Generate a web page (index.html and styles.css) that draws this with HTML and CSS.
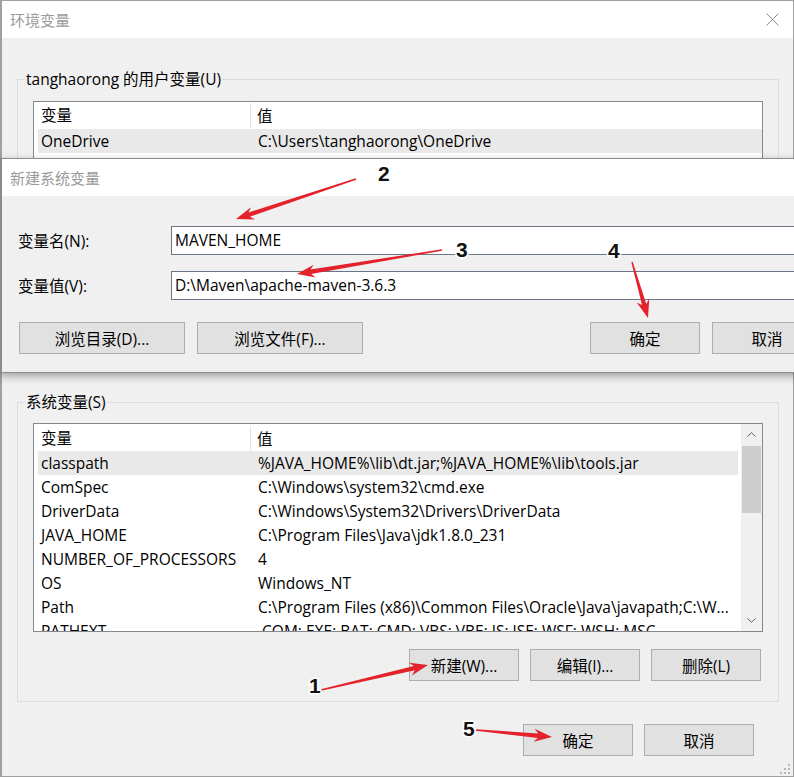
FILE: index.html
```html
<!DOCTYPE html>
<html lang="zh-CN">
<head>
<meta charset="utf-8">
<title>环境变量</title>
<link rel="stylesheet" href="styles.css">
</head>
<body>
<div class="window">
  <div class="titlebar">
    <span class="title">环境变量</span>
    <svg class="close" width="13" height="13" viewBox="0 0 13 13"><path d="M0.5 0.5 L12.5 12.5 M12.5 0.5 L0.5 12.5" stroke="#8a8a8a" stroke-width="1" fill="none"/></svg>
  </div>
  <div class="content">
    <fieldset class="group group-user">
      <legend>tanghaorong 的用户变量(U)</legend>
      <div class="listbox list-user">
        <div class="lv">
          <div class="lv-head"><div class="c1">变量</div><div class="c2">值</div></div>
          <div class="lv-row sel"><div class="c1">OneDrive</div><div class="c2">C:\Users\tanghaorong\OneDrive</div></div>
          <div class="lv-row"><div class="c1">Path</div><div class="c2">C:\Users\tanghaorong\AppData\Local\Microsoft\WindowsApps;</div></div>
          <div class="lv-row"><div class="c1">TEMP</div><div class="c2">C:\Users\tanghaorong\AppData\Local\Temp</div></div>
          <div class="lv-row"><div class="c1">TMP</div><div class="c2">C:\Users\tanghaorong\AppData\Local\Temp</div></div>
        </div>
      </div>
    </fieldset>

    <fieldset class="group group-sys">
      <legend>系统变量(S)</legend>
      <div class="listbox list-sys">
        <div class="lv">
          <div class="lv-head"><div class="c1">变量</div><div class="c2">值</div></div>
          <div class="lv-row sel"><div class="c1">classpath</div><div class="c2">%JAVA_HOME%\lib\dt.jar;%JAVA_HOME%\lib\tools.jar</div></div>
          <div class="lv-row"><div class="c1">ComSpec</div><div class="c2">C:\Windows\system32\cmd.exe</div></div>
          <div class="lv-row"><div class="c1">DriverData</div><div class="c2">C:\Windows\System32\Drivers\DriverData</div></div>
          <div class="lv-row"><div class="c1">JAVA_HOME</div><div class="c2">C:\Program Files\Java\jdk1.8.0_231</div></div>
          <div class="lv-row"><div class="c1">NUMBER_OF_PROCESSORS</div><div class="c2">4</div></div>
          <div class="lv-row"><div class="c1">OS</div><div class="c2">Windows_NT</div></div>
          <div class="lv-row"><div class="c1">Path</div><div class="c2">C:\Program Files (x86)\Common Files\Oracle\Java\javapath;C:\W...</div></div>
          <div class="lv-row"><div class="c1">PATHEXT</div><div class="c2">.COM;.EXE;.BAT;.CMD;.VBS;.VBE;.JS;.JSE;.WSF;.WSH;.MSC</div></div>
        </div>
        <div class="vscroll">
          <div class="sb-btn"><svg width="9" height="5" viewBox="0 0 9 5"><path d="M0.5 4.5 L4.5 0.7 L8.5 4.5" stroke="#606060" fill="none"/></svg></div>
          <div class="sb-track"><div class="sb-thumb"></div></div>
          <div class="sb-btn"><svg width="9" height="5" viewBox="0 0 9 5"><path d="M0.5 0.5 L4.5 4.3 L8.5 0.5" stroke="#606060" fill="none"/></svg></div>
        </div>
      </div>
      <div class="btnrow">
        <button class="btn">新建(W)...</button>
        <button class="btn">编辑(I)...</button>
        <button class="btn">删除(L)</button>
      </div>
    </fieldset>

    <div class="footer">
      <button class="btn">确定</button>
      <button class="btn">取消</button>
    </div>
  </div>
  <svg class="grip" width="10" height="10" viewBox="0 0 10 10">
    <rect x="8" y="0" width="2" height="2" fill="#b5b5b5"/>
    <rect x="8" y="4" width="2" height="2" fill="#b5b5b5"/>
    <rect x="4" y="4" width="2" height="2" fill="#b5b5b5"/>
    <rect x="8" y="8" width="2" height="2" fill="#b5b5b5"/>
    <rect x="4" y="8" width="2" height="2" fill="#b5b5b5"/>
    <rect x="0" y="8" width="2" height="2" fill="#b5b5b5"/>
  </svg>
</div>

<div class="dialog">
  <div class="dlg-title">新建系统变量</div>
  <div class="dlg-body">
    <div class="form">
      <label class="flabel">变量名(N):</label>
      <div class="finput">MAVEN_HOME</div>
      <label class="flabel">变量值(V):</label>
      <div class="finput">D:\Maven\apache-maven-3.6.3</div>
    </div>
    <div class="dlg-buttons">
      <div class="bgroup">
        <button class="btn btn-wide">浏览目录(D)...</button>
        <button class="btn btn-wide">浏览文件(F)...</button>
      </div>
      <div class="bgroup">
        <button class="btn">确定</button>
        <button class="btn">取消</button>
      </div>
    </div>
  </div>
</div>

<svg class="annotations" width="794" height="777" viewBox="0 0 794 777">
  <g class="arrow">
    <polygon points="0,-0.7 112.5,-2.2 108.5,-6.5 126.5,0 108.5,6.5 112.5,2.2 0,0.7" transform="translate(356,179) rotate(161.57)"/>
    <polygon points="0,-0.7 133,-2.2 129,-6.5 147,0 129,6.5 133,2.2 0,0.7" transform="translate(442,250) rotate(170.6)"/>
    <polygon points="0,-0.7 44.2,-2.2 40.2,-6.5 58.2,0 40.2,6.5 44.2,2.2 0,0.7" transform="translate(632,262) rotate(74.05)"/>
    <polygon points="0,-0.7 95.9,-2.2 91.9,-6.5 109.9,0 91.9,6.5 95.9,2.2 0,0.7" transform="translate(321,690) rotate(-13.15)"/>
    <polygon points="0,-0.7 62.3,-2.2 58.3,-6.5 76.3,0 58.3,6.5 62.3,2.2 0,0.7" transform="translate(476,730) rotate(5.26)"/>
  </g>
  <g class="num">
    <text x="378" y="181">2</text>
    <text x="456" y="257">3</text>
    <text x="608" y="258">4</text>
    <text x="309" y="693">1</text>
    <text x="463" y="736">5</text>
  </g>
</svg>
</body>
</html>
```

FILE: styles.css
```css
* { box-sizing: border-box; }

html, body {
  margin: 0;
  padding: 0;
}

body {
  width: 794px;
  height: 777px;
  overflow: hidden;
  position: relative;
  background: #f0f0f0;
  font-family: "Open Sans", "Noto Sans CJK SC", sans-serif;
  font-size: 15.5px;
  color: #000;
}

.window {
  width: 794px;
  height: 777px;
  border: 1px solid #a0a0a0;
  border-left-width: 2px;
  background: #f0f0f0;
  display: flex;
  flex-direction: column;
  position: relative;
}

.titlebar {
  height: 37px;
  flex: none;
  background: #fff;
  display: flex;
  align-items: center;
  justify-content: space-between;
  padding: 0 14px 0 8px;
}

.title {
  color: #9a9a9a;
  font-family: "Noto Sans CJK SC", sans-serif;
  font-size: 15px;
}

.close { display: block; }

.content {
  padding: 0 14px 0 15px;
  display: flex;
  flex-direction: column;
}

fieldset.group {
  margin: 0;
  min-width: 0;
  border: 1px solid #dcdcdc;
  padding: 0 15px;
}

legend {
  margin-left: -8px;
  padding: 0 1px;
  line-height: 20px;
}

.group-user {
  margin-top: 31px !important;
  padding-top: 12px !important;
  padding-bottom: 39px !important;
}

.group-sys {
  margin-top: 21px !important;
  padding-top: 11px !important;
  padding-bottom: 20px !important;
}

.listbox {
  background: #fff;
  border: 1px solid #828790;
  display: flex;
  overflow: hidden;
}

.list-user { height: 230px; }
.list-sys { height: 209px; }

.lv {
  flex: 1;
  min-width: 0;
  padding-left: 4px;
}

.list-sys .lv { padding-right: 3px; }

.lv-head {
  height: 27px;
  display: flex;
  align-items: center;
}

.lv-head .c1 {
  width: 213px;
  height: 25px;
  line-height: 25px;
  padding-left: 3px;
  border-right: 1px solid #e5e5e5;
}

.lv-head .c2 { padding-left: 6px; }

.list-sys .lv-head { padding-top: 2px; }

.lv-row {
  height: 24px;
  line-height: 24px;
  display: flex;
  white-space: nowrap;
}

.list-sys .lv-row { line-height: 25px; }

.lv-row .c1 {
  width: 217px;
  flex: none;
  padding-left: 3px;
}

.lv-row .c2 { padding-left: 3px; }

.lv-row.sel { background: #e9e9e9; }

.vscroll {
  width: 21px;
  flex: none;
  background: #f0f0f0;
  display: flex;
  flex-direction: column;
}

.sb-btn {
  height: 21px;
  flex: none;
  display: flex;
  align-items: center;
  justify-content: center;
}

.sb-btn svg { display: block; }

.sb-track { flex: 1; }

.sb-thumb {
  margin: 1px 1px 0;
  height: 67px;
  background: #cdcdcd;
}

.btn {
  height: 32px;
  width: 110px;
  margin: 0;
  padding: 0;
  background: #e1e1e1;
  border: 1px solid #adadad;
  border-radius: 0;
  font: inherit;
  color: #000;
}

.btn-wide { width: 166px; }

.btnrow {
  display: flex;
  justify-content: flex-end;
  gap: 11px;
  margin-top: 17px;
  padding-right: 2px;
}

.footer {
  display: flex;
  justify-content: flex-end;
  gap: 11px;
  margin-top: 22px;
  padding-right: 25px;
}

.grip {
  position: absolute;
  right: 3px;
  bottom: 2px;
}

/* overlapping dialog window */
.dialog {
  position: absolute;
  left: 0;
  top: 158px;
  width: 836px;
  height: 215px;
  border: 1px solid #8c8c8c;
  border-left-width: 2px;
  background: #f0f0f0;
  box-shadow: 0 3px 8px rgba(0, 0, 0, 0.35);
  z-index: 2;
}

.dlg-title {
  height: 37px;
  line-height: 37px;
  background: #fff;
  padding-left: 8px;
  color: #9a9a9a;
  font-family: "Noto Sans CJK SC", sans-serif;
  font-size: 15px;
}

.dlg-body {
  padding: 30px 13px 0 16px;
}

.form {
  display: grid;
  grid-template-columns: 153px 1fr;
  row-gap: 16px;
  align-items: center;
}

.flabel { line-height: 20px; }

.finput {
  height: 29px;
  line-height: 27px;
  border: 1px solid #6a7686;
  background: #fff;
  padding-left: 3px;
  white-space: nowrap;
}

.dlg-buttons {
  display: flex;
  justify-content: space-between;
  margin-top: 22px;
}

.bgroup {
  display: flex;
  gap: 12px;
}

.bgroup:first-child { margin-left: 1px; }

/* annotation layer */
.annotations {
  position: absolute;
  left: 0;
  top: 0;
  z-index: 5;
  pointer-events: none;
}

.arrow polygon { fill: #e3222b; }

.num text {
  font-family: "Liberation Sans", Arial, sans-serif;
  font-weight: bold;
  font-size: 21px;
  fill: #111;
  stroke: #fff;
  stroke-width: 3px;
  paint-order: stroke;
}
```
